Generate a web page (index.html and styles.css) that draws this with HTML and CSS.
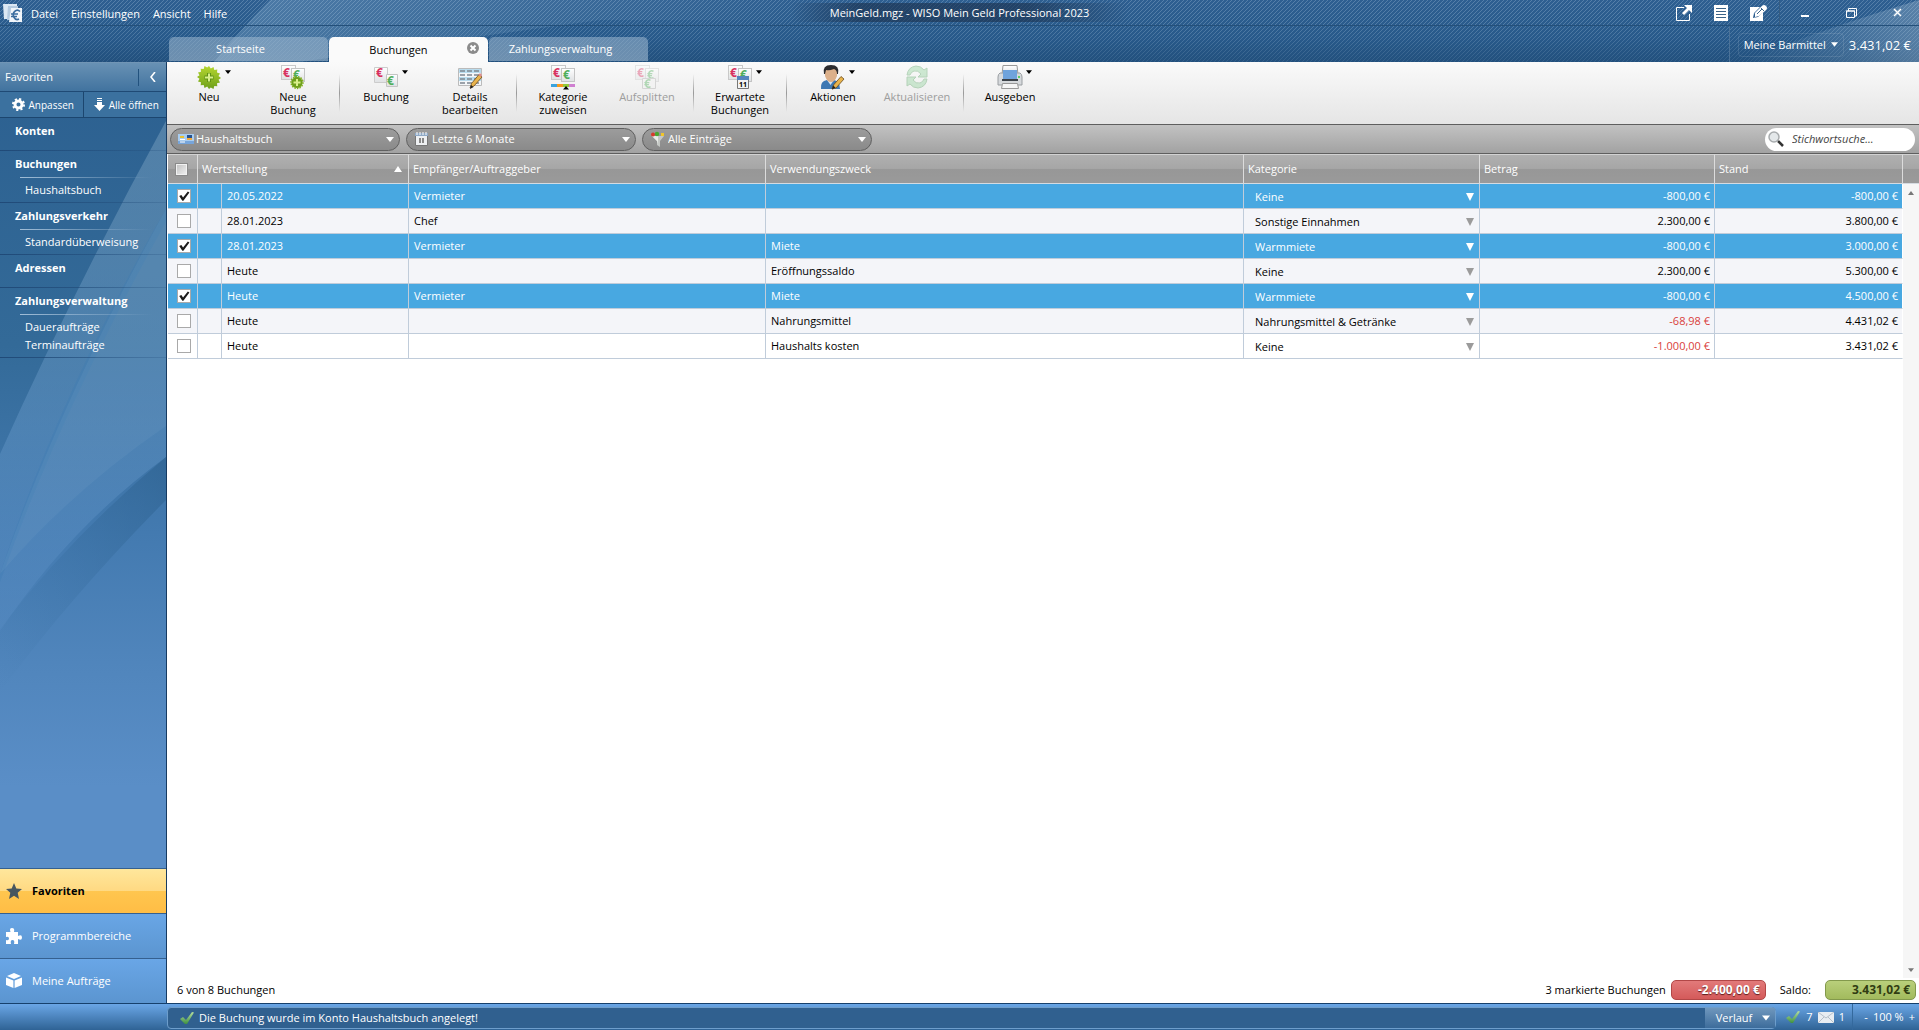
FILE: index.html
```html
<!DOCTYPE html>
<html lang="de">
<head>
<meta charset="utf-8">
<title>MeinGeld.mgz - WISO Mein Geld Professional 2023</title>
<link rel="stylesheet" href="styles.css">
</head>
<body>
<svg class="defs" width="0" height="0" aria-hidden="true">
  <defs>
    <linearGradient id="green" x1="0" y1="0" x2="0" y2="1"><stop offset="0" stop-color="#b5d62f"/><stop offset="1" stop-color="#6ea01b"/></linearGradient>
    <linearGradient id="sheen" x1="0" y1="0" x2="0" y2="1"><stop offset="0" stop-color="#b6dfa0"/><stop offset="1" stop-color="#3f9140"/></linearGradient>
    <linearGradient id="grey" x1="0" y1="0" x2="0" y2="1"><stop offset="0" stop-color="#fff"/><stop offset="1" stop-color="#dfe1e3"/></linearGradient>
    <symbol id="notes" viewBox="0 0 24 24">
      <rect x=".5" y=".5" width="14" height="14" fill="url(#grey)" stroke="#c9c9c9"/>
      <rect x="10.5" y="3.500" width="13" height="13" fill="url(#grey)" stroke="#c4c4c4"/>
      <text x="2" y="12" class="euro" fill="#d8315f">€</text>
      <text x="12" y="14" class="euro" fill="#4fae5b">€</text>
    </symbol>
    <symbol id="check" viewBox="0 0 16 14"><path d="M1 8 4 6l3 3L13 1l2 .5L8 13H6z" fill="url(#sheen)"/></symbol>
    <symbol id="down" viewBox="0 0 8 5"><path d="M0 0h8L4 5z" fill="currentColor"/></symbol>
  </defs>
</svg>
<div class="app">
  <header class="top">
    <svg class="swoosh" viewBox="0 0 1919 62" preserveAspectRatio="none" aria-hidden="true">
      <defs><linearGradient id="sw"><stop offset="0" stop-color="#8db4d4" stop-opacity=".34"/><stop offset=".35" stop-color="#8db4d4" stop-opacity="0"/></linearGradient>
      <linearGradient id="sr"><stop offset="0" stop-color="#8db4d4" stop-opacity="0"/><stop offset="1" stop-color="#a9c0d4" stop-opacity=".36"/></linearGradient></defs>
      <path d="M270 0H1919V20H600Q450 40 300 62H214Q240 30 270 0z" fill="url(#sw)"/>
      <path d="M1740 62Q1820 30 1919 0V62z" fill="url(#sr)"/>
    </svg>
    <svg class="weave" shape-rendering="crispEdges" aria-hidden="true">
      <defs><pattern id="hatch" width="4" height="4" patternUnits="userSpaceOnUse"><path d="M0 3h1v1H0zM1 2h1v1H1zM2 1h1v1H2zM3 0h1v1H3z" fill="#c3dbf0" opacity=".26"/></pattern></defs>
      <rect width="100%" height="100%" fill="url(#hatch)"/>
    </svg>
    <div class="menubar">
      <div class="menu-side">
        <svg class="logo" viewBox="0 0 20 20" aria-hidden="true"><path d="M0 1h14v3H5v12H1z" fill="#dce8f3"/><path d="M5 3h10v3H8L7 17H4z" fill="#b5cbe0"/><path d="M8 5h11v14H6z" fill="#f0f5fa"/><path d="M17 8.500a4 4.500 0 1 0-1 7.500M8 11h7M8 13.500h6" fill="none" stroke="#3a6c9e" stroke-width="1.700"/></svg>
        <nav class="menu">
          <a href="#">Datei</a><a href="#">Einstellungen</a><a href="#">Ansicht</a><a href="#">Hilfe</a>
        </nav>
      </div>
      <h1 class="title">MeinGeld.mgz - WISO Mein Geld Professional 2023</h1>
      <div class="tools">
        <button aria-label="Extern öffnen"><svg width="16" height="16" viewBox="0 0 16 16"><path d="M8 2.500H.5v13h13V9" fill="none" stroke="#fff"/><path d="M8 0h8v8l-3-3-5 5-2-2 5-5z" fill="#fff"/></svg></button>
        <button aria-label="Liste"><svg width="14" height="16" viewBox="0 0 14 16"><path d="M0 0h14v16H0z" fill="#fff"/><path d="M2 3.500h10M2 6.500h10M2 9.500h10M2 12.500h10" stroke="#3b6388"/></svg></button>
        <button aria-label="Notiz"><svg width="17" height="16" viewBox="0 0 17 16"><path d="M0 2h10L4 8l-1 5 5-1 5-5v9H0z" fill="#fff"/><path d="m5 8 7-7q2-2 4 0t0 4l-7 6-4 1z" fill="#fff"/><path d="m11 3 3 3M7 9l5-5" stroke="#3b6388"/></svg></button>
        <div class="window">
          <button aria-label="Minimieren"><svg width="10" height="10" viewBox="0 0 10 10"><path d="M1 7h8v2H1z" fill="#fff"/></svg></button>
          <button aria-label="Wiederherstellen"><svg width="11" height="10" viewBox="0 0 11 10"><path d="M.5 3h8v6.500h-8zM2.500 3V.5h8V8h-2M0 3h9" fill="none" stroke="#fff"/></svg></button>
          <button aria-label="Schließen"><svg width="9" height="9" viewBox="0 0 9 9"><path d="m1 1 7 7M8 1 1 8" stroke="#fff" stroke-width="1.500"/></svg></button>
        </div>
      </div>
    </div>
    <div class="tabrow">
      <div class="tabs" role="tablist">
        <button class="tab" role="tab">Startseite</button>
        <button class="tab active" role="tab" aria-selected="true">Buchungen
          <svg class="tab-close" width="12" height="12" viewBox="0 0 12 12" aria-hidden="true"><circle cx="6" cy="6" r="6" fill="#8b8b8b"/><path d="m3.500 3.500 5 5m0-5-5 5" stroke="#fff" stroke-width="2"/></svg>
        </button>
        <button class="tab" role="tab">Zahlungsverwaltung</button>
      </div>
      <div class="cash">
        <button class="cash-menu">Meine Barmittel<svg width="7" height="5"><use href="#down"/></svg></button>
        <span class="cash-sum">3.431,02 €</span>
      </div>
    </div>
  </header>

  <aside class="side">
    <svg class="rays" viewBox="0 0 166 806" preserveAspectRatio="none" aria-hidden="true">
      <defs>
        <linearGradient id="r1" x1="0" y1="0" x2="0" y2="1"><stop offset="0" stop-color="#86abc6" stop-opacity=".42"/><stop offset=".6" stop-color="#6a9ccc" stop-opacity=".4"/><stop offset="1" stop-color="#5a8ec6" stop-opacity=".3"/></linearGradient>
        <linearGradient id="r2" x1="1" y1="0" x2="0" y2="1"><stop offset="0" stop-color="#2d618f" stop-opacity=".6"/><stop offset="1" stop-color="#3c74a8" stop-opacity="0"/></linearGradient>
      </defs>
      <path d="M166 59Q75 225 0 392V569Q70 465 166 395z" fill="url(#r1)"/>
      <path d="M166 147Q60 330 0 512V520Q60 350 166 160z" fill="#3b79b4" opacity=".3"/>
      <path d="M166 147Q60 340 0 512Q70 430 166 364z" fill="#7eaacb" opacity=".14"/>
      <path d="M166 395Q70 475 0 567V630Q70 535 166 438z" fill="url(#r2)"/>
    </svg>
    <div class="side-head"><h2>Favoriten</h2><button class="fold" aria-label="Einklappen"><svg width="6" height="10" viewBox="0 0 6 10"><path d="M5 0 1 5l4 5" fill="none" stroke="#fff" stroke-width="1.600"/></svg></button></div>
    <div class="side-actions">
      <button><svg width="13" height="13" viewBox="0 0 14 14"><circle cx="7" cy="7" r="3.800" fill="none" stroke="#fff" stroke-width="3.200"/><circle cx="7" cy="7" r="6" fill="none" stroke="#fff" stroke-width="2" stroke-dasharray="2.350 2.350"/></svg>Anpassen</button>
      <button><svg width="11" height="13" viewBox="0 0 11 13"><path d="M3 0h5v1H3zM3 2h5v1H3zM3 4h5v3h3l-5.500 6L0 7h3z" fill="#fff"/></svg>Alle öffnen</button>
    </div>
    <nav class="groups">
      <section class="group"><h3>Konten</h3></section>
      <section class="group"><h3>Buchungen</h3><ul><li><a href="#">Haushaltsbuch</a></li></ul></section>
      <section class="group"><h3>Zahlungsverkehr</h3><ul><li><a href="#">Standardüberweisung</a></li></ul></section>
      <section class="group"><h3>Adressen</h3></section>
      <section class="group"><h3>Zahlungsverwaltung</h3><ul><li><a href="#">Daueraufträge</a></li><li><a href="#">Terminaufträge</a></li></ul></section>
    </nav>
    <nav class="areas">
      <a class="area current" href="#"><svg width="16" height="16" viewBox="0 0 16 16"><path d="m8 0 2.300 5.500 5.700.5-4.300 3.800L13 16l-5-3.300L3 16l1.300-6.200L0 6l5.700-.5z" fill="#47565f"/></svg>Favoriten</a>
      <a class="area" href="#"><svg width="16" height="16" viewBox="0 0 16 16"><path d="M0 4h4.500Q3 0 6 0t2 4h4v4q4-2 4 1.500T12 11v5H8q1-4-1.500-4T5 16H0v-4q3 1 3-1.500T0 9z" fill="#fff"/></svg>Programmbereiche</a>
      <a class="area" href="#"><svg width="16" height="16" viewBox="0 0 16 16"><path d="m8 0 7 3-7 3-7-3zM0 4.500l7.400 3V15L0 12zM16 4.500l-7.400 3V15l7.400-3z" fill="#fff"/></svg>Meine Aufträge</a>
    </nav>
  </aside>

  <main class="main">
    <div class="toolbar" role="toolbar">
      <button class="tool"><svg class="ico" viewBox="0 0 24 24"><path d="m12 1 1.800 2.500L16.500 2l.8 3 3-.4-.3 3 3 .8-1.500 2.600L24 13l-2.500 1.800L23 17.500l-3 .8.3 3-3-.3-.8 3-2.700-1.500L12 24l-1.800-2.500L7.500 23l-.8-3-3 .3.300-3-3-.8 1.500-2.700L0 12l2.500-1.800L1 7.500l3-.8-.3-3 3 .3.800-3 2.700 1.500z" fill="url(#green)"/><path d="M12 8v9M7.500 12.500h9" stroke="#5f9214" stroke-width="4"/><path d="M12 8.500v8M8 12.500h8" stroke="#d9f08a" stroke-width="2"/></svg><svg class="drop" width="6" height="4"><use href="#down"/></svg>Neu</button>
      <button class="tool"><svg class="ico" viewBox="0 0 24 24"><use href="#notes"/><circle cx="16" cy="17.500" r="5.600" fill="#6ea01b"/><circle cx="16" cy="17.500" r="6" fill="none" stroke="#82b01d" stroke-width="1.400" stroke-dasharray="1.500 1.100"/><path d="M16 14v7m-3.500-3.500h7" stroke="#d9f08a" stroke-width="2"/></svg>Neue<br>Buchung</button>
      <span class="sep"></span>
      <button class="tool"><svg class="ico" viewBox="0 0 24 24"><path d="M.5 2.500h13v15H.5z" fill="url(#grey)" stroke="#ccc"/><path d="M12.500 9.500h11v12h-11z" fill="url(#grey)" stroke="#c4c4c4"/><text x="2" y="12" class="euro" fill="#d8315f">€</text><text x="13" y="20" class="euro" fill="#4fae5b">€</text></svg><svg class="drop" width="6" height="4"><use href="#down"/></svg>Buchung</button>
      <button class="tool"><svg class="ico" viewBox="0 0 24 24"><path d="M.5 3.500h23v17H.5z" fill="#f4f6f8" stroke="#bbb"/><path d="M1 4h22v4H1zM1 12h22v4H1z" fill="#b9dcee"/><path d="M2 6h20M2 10h20M2 14h20M2 18h20" stroke="#7d8790" stroke-width="1.400" stroke-dasharray="5 2"/><path d="m12 23 1.500-4.500L21 9.500l3 2.500-8 9z" fill="#e9b44c" stroke="#6b4a1c" stroke-width=".8"/><path d="m12 24 1-4 2.500 2z" fill="#222"/><path d="m20.500 10 1.500-2 2 2-1 2z" fill="#dd8f8f"/></svg>Details<br>bearbeiten</button>
      <span class="sep"></span>
      <button class="tool"><svg class="ico" viewBox="0 0 24 24"><use href="#notes"/><path d="M0 19h6v3H0z" fill="#3aa3dd"/><path d="M6 19h6v3H6z" fill="#f59a1d"/><path d="M12 19h6v3h-6z" fill="#93c938"/><path d="M18 19h6v3h-6z" fill="#cf7fd0"/><path d="m12 24.500 3-3.500 3 3.500z" fill="#000"/></svg>Kategorie<br>zuweisen</button>
      <button class="tool" disabled><svg class="ico faded" viewBox="0 0 24 24"><use href="#notes"/><path d="M7.500 13.500h13v10h-13z" fill="#f2f2f2" stroke="#aaa"/><text x="9" y="23" class="euro" fill="#4fae5b">€</text></svg>Aufsplitten</button>
      <span class="sep"></span>
      <button class="tool"><svg class="ico" viewBox="0 0 24 24"><use href="#notes"/><path d="M9.500 12.500h11v11h-11z" fill="#f3f3f3" stroke="#777"/><path d="M9 11h12v4H9z" fill="#5485bd"/><text x="11" y="22" class="day">11</text></svg><svg class="drop" width="6" height="4"><use href="#down"/></svg>Erwartete<br>Buchungen</button>
      <span class="sep"></span>
      <button class="tool"><svg class="ico" viewBox="0 0 24 24"><path d="M0 24q-1-8 6-9h7q6 1 6 9z" fill="#3d78b3"/><path d="M6 15h7l-3.500 5z" fill="#d8e4ee"/><path d="M4 4q5-4 12 0v7q-2 6-6 6t-6-6z" fill="#dcb08a"/><path d="M3 9Q1 0 10 0t7 9h-1q0-4-3-5-5 2-8 1l-1 4z" fill="#2c2c2f"/><path d="m11 24 1.500-4L20 11.500l3 2.500-8 9z" fill="#e9b44c" stroke="#6b4a1c" stroke-width=".8"/><path d="m11 24.500 1-4 2.500 2z" fill="#222"/></svg><svg class="drop" width="6" height="4"><use href="#down"/></svg>Aktionen</button>
      <button class="tool" disabled><svg class="ico faded" viewBox="0 0 24 24"><path d="M2 10q1-8 9-9 5 0 8 4l3-2v9h-9l3-3q-3-4-7-3-3 1-4 4zM22 14q-1 8-9 9-5 0-8-4l-3 2v-9h9l-3 3q3 4 7 3 3-1 4-4z" fill="#8fd29a" stroke="#58a063"/></svg>Aktualisieren</button>
      <span class="sep"></span>
      <button class="tool"><svg class="ico" viewBox="0 0 24 24"><path d="M5 .5h14l1 9H4z" fill="url(#grey)" stroke="#999"/><path d="M2 8h20q2 1 2 4v8H0v-8q0-3 2-4z" fill="#d6d9dc" stroke="#9a9ea2"/><path d="M5 5h14v9H5z" fill="#6fa3dc"/><path d="M4 14h16v2H4z" fill="#3d434a"/><path d="M4.500 18.500h15l1 5h-17z" fill="#f6f6f6" stroke="#999"/><circle cx="21" cy="12" r="1" fill="#3c4"/></svg><svg class="drop" width="6" height="4"><use href="#down"/></svg>Ausgeben</button>
    </div>

    <form class="filters">
      <label class="pill"><svg width="16" height="16" viewBox="0 0 16 16" aria-hidden="true"><path d="M0 3h16v10H0z" fill="#a9cdf0"/><path d="M0 10h16v3H0z" fill="#77a5da"/><path d="M2 5h4v2H2z" fill="#e8c230"/><path d="M9 4h5v3H9z" fill="#26518c"/><path d="M9 7h5v2H9z" fill="#f2a93b"/><path d="M2 8.500h5M2 11h5" stroke="#fff"/></svg>
        <select aria-label="Konto"><option>Haushaltsbuch</option></select><svg class="arrow" width="8" height="5"><use href="#down"/></svg></label>
      <label class="pill"><svg width="16" height="16" viewBox="0 0 16 16" aria-hidden="true"><path d="M1.500 2.500h12v12h-12z" fill="#eef0f2" stroke="#777"/><path d="M1 2h13v3H1z" fill="#8fa9c6"/><path d="M3 1v3M6 1v3M9 1v3M12 1v3" stroke="#fff"/><path d="M6 7v5M9 7v5" stroke="#888" stroke-width="2"/></svg>
        <select aria-label="Zeitraum"><option>Letzte 6 Monate</option></select><svg class="arrow" width="8" height="5"><use href="#down"/></svg></label>
      <label class="pill"><svg width="16" height="16" viewBox="0 0 16 16" aria-hidden="true"><path d="M2 5h12l-4 5v6l-3-2v-4z" fill="#c5c8c5"/><path d="M2 5h6v8l-1-3z" fill="#e8ebe8"/><circle cx="3" cy="3.500" r="2" fill="#d8392b"/><circle cx="7" cy="3" r="2.200" fill="#4aa82e"/><path d="M11 2h3v3h-3z" fill="#f0c52a"/></svg>
        <select aria-label="Einträge"><option>Alle Einträge</option></select><svg class="arrow" width="8" height="5"><use href="#down"/></svg></label>
      <label class="search"><svg width="16" height="16" viewBox="0 0 16 16" aria-hidden="true"><path d="m10 10 5 5" stroke="#333" stroke-width="2.500"/><circle cx="6" cy="6" r="5" fill="#e4e8ea" stroke="#a8acae" stroke-width="1.500"/></svg>
        <input type="search" placeholder="Stichwortsuche..." aria-label="Stichwortsuche"></label>
    </form>

    <div class="grid">
      <table class="bookings">
        <colgroup><col class="c-check"><col class="c-mark"><col class="c-date"><col class="c-name"><col><col class="c-cat"><col class="c-sum"><col class="c-bal"></colgroup>
        <thead>
          <tr><th class="pick"><input class="all" type="checkbox" aria-label="Alle markieren"></th><th colspan="2"><span class="sorted">Wertstellung<svg width="8" height="6" viewBox="0 0 8 6"><path d="M0 6h8L4 0z" fill="#fff"/></svg></span></th><th>Empfänger/Auftraggeber</th><th>Verwendungszweck</th><th>Kategorie</th><th>Betrag</th><th>Stand</th></tr>
        </thead>
        <tbody>
          <tr class="on"><td class="pick"><input type="checkbox" checked aria-label="Markieren"></td><td></td><td>20.05.2022</td><td>Vermieter</td><td></td><td class="cat"><label><select aria-label="Kategorie"><option>Keine</option></select><svg width="8" height="8" viewBox="0 0 8 8"><path d="M0 0h8L4 8z"/></svg></label></td><td class="num">-800,00 €</td><td class="num">-800,00 €</td></tr>
          <tr><td class="pick"><input type="checkbox" aria-label="Markieren"></td><td></td><td>28.01.2023</td><td>Chef</td><td></td><td class="cat"><label><select aria-label="Kategorie"><option>Sonstige Einnahmen</option></select><svg width="8" height="8" viewBox="0 0 8 8"><path d="M0 0h8L4 8z"/></svg></label></td><td class="num">2.300,00 €</td><td class="num">3.800,00 €</td></tr>
          <tr class="on"><td class="pick"><input type="checkbox" checked aria-label="Markieren"></td><td></td><td>28.01.2023</td><td>Vermieter</td><td>Miete</td><td class="cat"><label><select aria-label="Kategorie"><option>Warmmiete</option></select><svg width="8" height="8" viewBox="0 0 8 8"><path d="M0 0h8L4 8z"/></svg></label></td><td class="num">-800,00 €</td><td class="num">3.000,00 €</td></tr>
          <tr><td class="pick"><input type="checkbox" aria-label="Markieren"></td><td></td><td>Heute</td><td></td><td>Eröffnungssaldo</td><td class="cat"><label><select aria-label="Kategorie"><option>Keine</option></select><svg width="8" height="8" viewBox="0 0 8 8"><path d="M0 0h8L4 8z"/></svg></label></td><td class="num">2.300,00 €</td><td class="num">5.300,00 €</td></tr>
          <tr class="on"><td class="pick"><input type="checkbox" checked aria-label="Markieren"></td><td></td><td>Heute</td><td>Vermieter</td><td>Miete</td><td class="cat"><label><select aria-label="Kategorie"><option>Warmmiete</option></select><svg width="8" height="8" viewBox="0 0 8 8"><path d="M0 0h8L4 8z"/></svg></label></td><td class="num">-800,00 €</td><td class="num">4.500,00 €</td></tr>
          <tr><td class="pick"><input type="checkbox" aria-label="Markieren"></td><td></td><td>Heute</td><td></td><td>Nahrungsmittel</td><td class="cat"><label><select aria-label="Kategorie"><option>Nahrungsmittel &amp; Getränke</option></select><svg width="8" height="8" viewBox="0 0 8 8"><path d="M0 0h8L4 8z"/></svg></label></td><td class="num minus">-68,98 €</td><td class="num">4.431,02 €</td></tr>
          <tr class="plain"><td class="pick"><input type="checkbox" aria-label="Markieren"></td><td></td><td>Heute</td><td></td><td>Haushalts kosten</td><td class="cat"><label><select aria-label="Kategorie"><option>Keine</option></select><svg width="8" height="8" viewBox="0 0 8 8"><path d="M0 0h8L4 8z"/></svg></label></td><td class="num minus">-1.000,00 €</td><td class="num">3.431,02 €</td></tr>
        </tbody>
      </table>
      <div class="scroll">
        <span class="scroll-cap"></span>
        <button aria-label="Nach oben"><svg width="6" height="4" viewBox="0 0 6 4"><path d="M0 4h6L3 0z" fill="#777"/></svg></button>
        <span class="scroll-track"></span>
        <button aria-label="Nach unten"><svg width="6" height="4"><use href="#down"/></svg></button>
      </div>
    </div>

    <div class="totals">
      <span>6 von 8 Buchungen</span>
      <span class="marked">3 markierte Buchungen</span>
      <output class="badge red">-2.400,00 €</output>
      <span class="saldo">Saldo:</span>
      <output class="badge lime">3.431,02 €</output>
    </div>
  </main>

  <footer class="status">
    <div class="message"><svg width="16" height="14"><use href="#check"/></svg><span>Die Buchung wurde im Konto Haushaltsbuch angelegt!</span><button class="history">Verlauf<svg width="8" height="6"><use href="#down"/></svg></button></div>
    <div class="counts"><svg width="16" height="14"><use href="#check"/></svg><span>7</span><svg width="16" height="11" viewBox="0 0 16 11"><path d="M0 0h16v11H0z" fill="#e8edf2"/><path d="m0 0 8 6 8-6M0 11l6-6m10 6-6-6" fill="none" stroke="#b4bec8"/></svg><span>1</span></div>
    <div class="zoom"><button aria-label="Verkleinern">-</button><span>100 %</span><button aria-label="Vergrößern">+</button></div>
  </footer>
</div>
</body>
</html>
```
FILE: styles.css
```css
* { box-sizing: border-box; }

body {
  margin: 0;
  font: 11px/14px "Open Sans", "Noto Sans", sans-serif;
  color: #000;
}

button, select, input {
  font: inherit;
  color: inherit;
  margin: 0;
  padding: 0;
  border: 0;
  background: none;
}

a { color: inherit; text-decoration: none; }
h1, h2, h3, ul { margin: 0; padding: 0; font: inherit; list-style: none; }
svg { flex: none; display: block; }
.defs { position: absolute; }
.euro { font: bold 12px "Open Sans", sans-serif; }
.day { font: bold 7px "Open Sans", sans-serif; }

.app {
  min-height: 100vh;
  display: grid;
  grid-template: 62px 1fr 27px / 167px minmax(0, 1fr);
}

/* Title bar and tabs */
.top {
  grid-column: 1 / -1;
  position: relative;
  color: #fff;
  background: linear-gradient(#2e5f91, #285a8b 60%, #22507d);
}
.swoosh, .weave { position: absolute; inset: 0; width: 100%; height: 100%; }
.weave { mask-image: linear-gradient(#000 40%, rgba(0, 0, 0, .4)); }

.menubar {
  position: relative;
  height: 26px;
  display: grid;
  grid-template-columns: 1fr auto 1fr;
  align-items: center;
  border-bottom: 1px solid #24507a;
}
.menu-side { display: flex; align-items: center; padding-left: 3px; }
.logo { width: 20px; height: 20px; }
.menu { display: flex; gap: 13px; padding: 2px 0 0 8px; }
.title {
  padding: 3px 40px 2px;
  background: linear-gradient(90deg, transparent, rgba(28, 52, 82, .65) 20%, rgba(28, 52, 82, .65) 70%, transparent);
}
.tools { display: flex; justify-content: flex-end; align-items: center; gap: 22px; }
.window {
  height: 25px;
  display: flex;
  align-items: center;
  gap: 36px;
  padding: 0 17px 0 20px;
  margin-left: -10px;
  border-left: 1px solid #355c82;
}

.tabrow { position: relative; height: 36px; display: flex; justify-content: space-between; padding-left: 169px; }
.tabs { display: flex; align-items: flex-end; gap: 1px; }
.tab {
  position: relative;
  width: 159px;
  height: 24px;
  margin-bottom: 1px;
  padding-right: 16px;
  border-radius: 5px 5px 0 0;
  background: linear-gradient(rgba(165, 190, 212, .5), rgba(165, 190, 212, .58));
}
.tab.active { height: 25px; margin-bottom: 0; padding-right: 20px; color: #000; background: #fafafa; }
.tab-close { position: absolute; top: 5px; right: 9px; }
.cash { display: flex; align-items: center; gap: 5px; padding: 1px 8px 0; border-left: 1px solid #4b7298; }
.cash-menu {
  display: flex;
  align-items: center;
  gap: 5px;
  height: 24px;
  padding: 0 5px;
  border: 1px solid rgba(255, 255, 255, .1);
  border-radius: 4px;
}
.cash-sum { font-size: 13px; line-height: 18px; }

/* Sidebar */
.side {
  position: relative;
  display: flex;
  flex-direction: column;
  color: #fff;
  border-right: 1px solid #173b62;
  background: linear-gradient(#2c6090, #336a98 30%, #437ab0 50%, #5186bd 65%, #5a8ec7 77%);
}
.rays { position: absolute; top: 0; left: 0; width: 100%; height: 806px; }
.side-head {
  position: relative;
  display: flex;
  align-items: center;
  justify-content: space-between;
  height: 30px;
  padding-left: 5px;
  border-top: 1px solid #7195b5;
  border-bottom: 1px solid #1f4a75;
  background: linear-gradient(#6891b4, #41739f);
}
.fold { display: flex; justify-content: center; align-items: center; width: 28px; height: 17px; border-left: 1px solid #22527e; }
.side-actions { position: relative; display: flex; height: 26px; font-size: 10px; border-bottom: 1px solid #1c466f; background: #3b719f; }
.side-actions button { flex: 1; display: flex; align-items: center; justify-content: center; gap: 4px; padding-left: 3px; white-space: nowrap; }
.side-actions button + button { border-left: 1px solid #1c466f; }
.groups { position: relative; flex: 1; }
.group {
  padding-bottom: 6px;
  border-bottom: 1px solid;
  border-image: linear-gradient(90deg, #204a78, rgba(32, 74, 120, .2)) 1;
}
.group:has(ul) { padding-bottom: 3px; }
.group h3 { padding-left: 15px; font-weight: 700; line-height: 26px; }
.group ul {
  padding: 3px 0 0 5px;
  margin-left: 20px;
  border-top: 1px solid;
  border-image: linear-gradient(90deg, rgba(190, 212, 232, .8), transparent 90%) 1;
}
.group li { line-height: 18px; }
.areas { position: relative; }
.area {
  display: flex;
  align-items: center;
  gap: 10px;
  height: 45px;
  padding-left: 6px;
  border-top: 1px solid #35608f;
  background: linear-gradient(#69a6e6, #5b95d0);
}
.area.current { color: #000; font-weight: 700; background: linear-gradient(#ffe79c, #ffd982 50%, #ffc64f 50%, #ffbd45); }

/* Work area */
.main { display: flex; flex-direction: column; background: #fff; }
.toolbar { display: flex; height: 62px; background: linear-gradient(#fafafa, #e5e5e5); }
.tool {
  position: relative;
  width: 84px;
  display: flex;
  flex-direction: column;
  align-items: center;
  padding-top: 3px;
  line-height: 13px;
}
.tool:disabled { color: #9d9d9d; }
.ico { width: 24px; height: 24px; margin-bottom: 1px; overflow: visible; }
.faded { opacity: .4; }
.drop { position: absolute; top: 8px; left: 58px; }
.sep { width: 1px; margin: 12px 4px; background: linear-gradient(transparent, #999 50%, transparent); }

.filters {
  display: flex;
  align-items: center;
  gap: 6px;
  height: 30px;
  padding: 0 4px 0 3px;
  border-top: 1px solid #5f5f5f;
  border-bottom: 1px solid #5f5f5f;
  background: linear-gradient(#c2c2c2, #a2a2a2);
}
.pill {
  display: flex;
  align-items: center;
  gap: 2px;
  width: 230px;
  height: 23px;
  padding: 0 5px 0 7px;
  color: #fff;
  border: 1px solid #606060;
  border-radius: 12px;
  background: linear-gradient(#9c9c9c, #8a8a8a);
}
select { appearance: none; flex: 1; min-width: 0; }
.search {
  display: flex;
  align-items: center;
  gap: 8px;
  width: 150px;
  height: 23px;
  margin-left: auto;
  padding: 0 12px 0 3px;
  border-radius: 12px;
  background: #fff;
}
.search input { flex: 1; min-width: 0; outline: 0; }
.search input::placeholder { color: #444; font-style: italic; opacity: 1; }

.grid { flex: 1; display: flex; align-items: stretch; padding-left: 1px; }
.bookings { flex: 1; align-self: flex-start; min-width: 0; table-layout: fixed; border-collapse: separate; border-spacing: 0; }
.c-check { width: 30px; }
.c-mark { width: 24px; }
.c-date { width: 187px; }
.c-name { width: 357px; }
.c-cat { width: 236px; }
.c-sum { width: 235px; }
.c-bal { width: 188px; }
th, .scroll-cap {
  height: 30px;
  border-top: 1px solid #d2d2d2;
  border-bottom: 1px solid #d5dbe1;
  background: linear-gradient(#b0b0b0, #a6a6a6 48%, #979797 52%, #9a9a9a);
}
th { padding: 0 4px; text-align: left; font-weight: 400; color: #fff; border-right: 1px solid #dcdcdc; }
.sorted { display: flex; justify-content: space-between; align-items: center; padding-right: 2px; }
td { height: 25px; padding: 0 5px; border-right: 1px solid #c0ccda; border-bottom: 1px solid #c0ccda; background: #f4f5f9; }
.plain td { background: #fff; }
td:last-child { border-right-color: transparent; background-clip: padding-box; }
.on td { color: #fff; background-color: #48a8e1; }
.num { text-align: right; padding-right: 4px; }
.minus { color: #d9413b; }
.cat { padding: 2px 5px 0 11px; }
.cat label { display: flex; align-items: center; }
.cat svg { fill: #9b9b9b; }
.on .cat svg { fill: #fff; }
td.pick, th.pick { padding: 0 0 0 9px; }
th.pick { padding-left: 7px; }
.pick input { appearance: none; display: block; width: 14px; height: 14px; border: 1px solid #a9a9a9; background: #fff; }
.pick .all { width: 13px; height: 13px; border: 2px solid #f2f2f2; outline: 1px solid #8b8b8b; outline-offset: -1px; background: linear-gradient(135deg, #c4c4c4, #eee); }
.pick input:checked::before {
  content: "";
  display: block;
  width: 12px;
  height: 12px;
  background: #1c1c1c;
  clip-path: polygon(10% 50%, 28% 42%, 42% 62%, 82% 12%, 95% 20%, 45% 90%, 36% 90%);
}

.scroll { width: 16px; display: flex; flex-direction: column; background: #f6f6f6; }
.scroll-cap { display: block; }
.scroll button { display: flex; align-items: center; justify-content: center; height: 17px; color: #777; }
.scroll-track { flex: 1; }

.totals { display: flex; align-items: center; height: 25px; padding: 0 3px 2px 10px; }
.marked { margin-left: auto; }
.saldo { margin: 0 14px; }
.badge {
  height: 20px;
  padding-right: 5px;
  font-size: 12px;
  font-weight: 700;
  line-height: 18px;
  text-align: right;
  border: 1px solid;
  border-radius: 5px;
}
.badge.red { width: 95px; margin-left: 5px; color: #fff; text-shadow: 0 1px 1px #5d1c1c; border-color: #b24747; background: linear-gradient(#e27a7a, #d45a5a); }
.badge.lime { width: 91px; color: #303c12; border-color: #83994c; background: linear-gradient(#b9cf7b, #a2ba5d); }

/* Status bar */
.status {
  grid-column: 1 / -1;
  display: flex;
  padding-left: 167px;
  color: #fff;
  border-top: 1px solid #16406c;
  background: linear-gradient(#6aa6e6, #2f6395);
}
.message {
  flex: 1;
  display: flex;
  align-items: center;
  gap: 4px;
  margin: 3px 0 1px;
  padding-left: 11px;
  border: 1px solid #6d9dcb;
  border-radius: 4px;
  background: #30608f;
}
.history {
  display: flex;
  align-items: center;
  gap: 10px;
  height: 20px;
  margin-left: auto;
  padding: 0 5px 0 11px;
  background: linear-gradient(#6f97bd, #3d6c9b);
}
.counts { display: flex; align-items: center; gap: 5px; width: 76px; padding-left: 9px; }
.zoom { display: flex; align-items: center; gap: 5px; padding: 0 4px 0 11px; border-left: 1px solid #34699d; }
```
